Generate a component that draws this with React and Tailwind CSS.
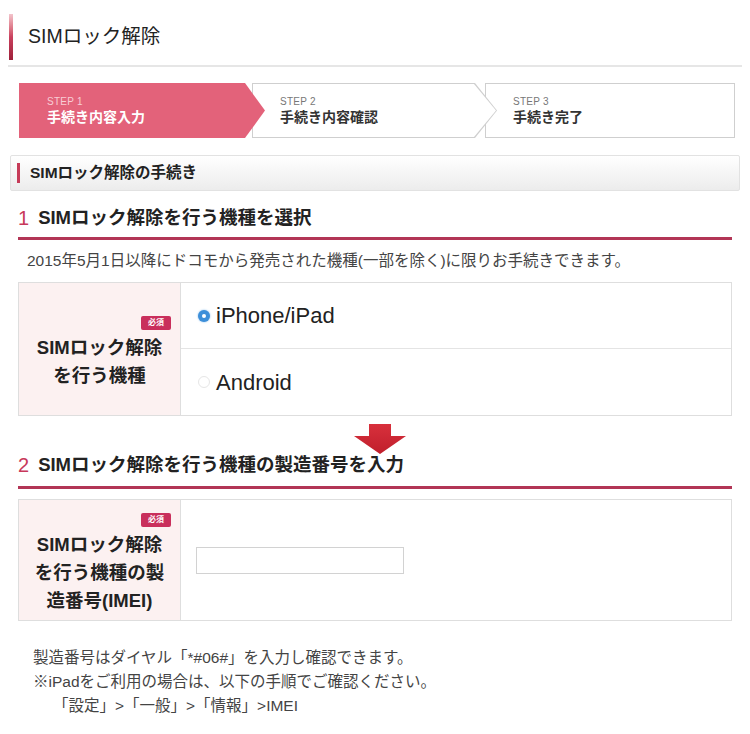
import React from "react";

const font = { fontFamily: '"Liberation Sans", "Noto Sans CJK JP", sans-serif' };

const Badge = () => (
  <span className="inline-flex items-center justify-center w-[30px] h-[14px] rounded-[2px] bg-[#c92f5c] text-white text-[8px] font-bold leading-none">
    必須
  </span>
);

const Radio = ({ checked }) =>
  checked ? (
    <span className="flex items-center justify-center w-[12px] h-[12px] rounded-full bg-[#3d8fd9] shadow-[0_0_2px_#7fb6ea]">
      <span className="w-[4px] h-[4px] rounded-full bg-white"></span>
    </span>
  ) : (
    <span className="w-[12px] h-[12px] rounded-full border border-[#e6e6e6] bg-white"></span>
  );

const Step = ({ num, label, active, shape, className }) => (
  <div className={`relative h-[55px] ${className}`}>
    {active ? (
      <div className={`absolute inset-0 bg-[#e3627a] ${shape}`}></div>
    ) : (
      <>
        <div className={`absolute inset-0 bg-[#cfcfcf] ${shape}`}></div>
        <div className={`absolute inset-[1px] bg-white ${shape}`}></div>
      </>
    )}
    <div className="relative flex flex-col justify-center h-full pl-[28px]">
      <span className={`text-[10px] leading-[13px] tracking-wide ${active ? "text-[#f8cdd5]" : "text-[#777]"}`}>
        STEP {num}
      </span>
      <span className={`text-[14px] leading-[18px] font-bold ${active ? "text-white" : "text-[#333]"}`}>
        {label}
      </span>
    </div>
  </div>
);

const Heading = ({ num, children, className }) => (
  <div className={`mx-[18px] ${className}`}>
    <div className="flex items-center gap-[9px] h-full">
      <span className="text-[20px] text-[#c8385a] leading-none">{num}</span>
      <span className="text-[18.5px] font-bold text-[#222] leading-none">{children}</span>
    </div>
  </div>
);

export default function App() {
  return (
    <div className="w-[750px] h-[734px] bg-white text-[#333]" style={font}>
      {/* page title */}
      <div className="flex items-center pt-[14px] pl-[9px]">
        <div className="w-[4px] h-[46px] bg-gradient-to-b from-[#f2c4cc] via-[#c9405e] to-[#9e1f39]"></div>
        <h1 className="ml-[15px] text-[19.5px] text-[#222] leading-none">SIMロック解除</h1>
      </div>
      <div className="mx-[8px] mt-[5px] h-[2px] bg-[#e6e6e6]"></div>

      {/* steps */}
      <div className="flex mt-[16px] ml-[19px]">
        <Step
          num="1"
          label="手続き内容入力"
          active
          className="w-[246px] z-30"
          shape="[clip-path:polygon(0_0,calc(100%-20px)_0,100%_50%,calc(100%-20px)_100%,0_100%)]"
        />
        <Step
          num="2"
          label="手続き内容確認"
          className="w-[245px] -ml-[13px] z-20"
          shape="[clip-path:polygon(0_0,calc(100%-22px)_0,100%_50%,calc(100%-22px)_100%,0_100%)]"
        />
        <Step num="3" label="手続き完了" className="w-[250px] -ml-[12px] z-10" shape="" />
      </div>

      {/* section box */}
      <div className="mx-[10px] mt-[17px] h-[36px] flex items-center rounded-[2px] border border-[#e2e2e2] bg-gradient-to-b from-white to-[#ececec]">
        <div className="ml-[6px] w-[3px] h-[20px] bg-[#c63b58]"></div>
        <span className="ml-[10px] text-[15.5px] font-bold text-[#222]">SIMロック解除の手続き</span>
      </div>

      <Heading num="1" className="mt-[8px] h-[38px]">SIMロック解除を行う機種を選択</Heading>
      <div className="mx-[18px] h-[3px] bg-[#b23556]"></div>

      <p className="h-[42px] flex items-center pl-[27px] text-[15.5px] text-[#444]">
        2015年5月1日以降にドコモから発売された機種(一部を除く)に限りお手続きできます。
      </p>

      {/* table 1 */}
      <div className="mx-[18px] flex border border-[#dedede]">
        <div className="w-[162px] shrink-0 bg-[#fcf1f1] border-r border-[#dedede] flex flex-col justify-center items-center">
          <div className="self-end pr-[9px]">
            <Badge />
          </div>
          <p className="mt-[2px] text-[18.5px] font-bold leading-[28px] text-center text-[#222]">
            SIMロック解除
            <br />
            を行う機種
          </p>
        </div>
        <div className="flex-1">
          <div className="h-[66px] flex items-center gap-[6px] pl-[17px] border-b border-[#e4e4e4]">
            <Radio checked />
            <span className="text-[22px] text-[#222]">iPhone/iPad</span>
          </div>
          <div className="h-[66px] flex items-center gap-[6px] pl-[17px]">
            <Radio />
            <span className="text-[22px] text-[#222]">Android</span>
          </div>
        </div>
      </div>

      {/* arrow */}
      <div className="flex justify-center mt-[8px] pl-[10px] h-[30px]">
        <svg width="52" height="30" viewBox="0 0 52 30">
          <defs>
            <linearGradient id="ar" x1="0" y1="0" x2="0" y2="1">
              <stop offset="0" stopColor="#d8303c" />
              <stop offset="1" stopColor="#c01f2c" />
            </linearGradient>
          </defs>
          <path d="M15 0 H37 V12 H52 L26 30 L0 12 H15 Z" fill="url(#ar)" />
        </svg>
      </div>

      <Heading num="2" className="-mt-[4px] h-[36px] pb-[6px]">SIMロック解除を行う機種の製造番号を入力</Heading>
      <div className="mx-[18px] h-[3px] bg-[#b23556]"></div>

      {/* table 2 */}
      <div className="mx-[18px] mt-[10px] h-[122px] flex border border-[#dedede]">
        <div className="w-[162px] shrink-0 bg-[#fcf1f1] border-r border-[#dedede] flex flex-col justify-center items-center">
          <div className="self-end pr-[9px]">
            <Badge />
          </div>
          <p className="mt-[2px] text-[18.5px] font-bold leading-[28px] text-center text-[#222]">
            SIMロック解除
            <br />
            を行う機種の製
            <br />
            造番号(IMEI)
          </p>
        </div>
        <div className="flex-1 flex items-center pl-[15px]">
          <input
            type="text"
            className="w-[208px] h-[27px] border border-[#d2d2d2] bg-white outline-none"
          />
        </div>
      </div>

      {/* notes */}
      <div className="mt-[25px] pl-[33px] text-[15.5px] leading-[24px] text-[#444]">
        <p>製造番号はダイヤル「*#06#」を入力し確認できます。</p>
        <p>※iPadをご利用の場合は、以下の手順でご確認ください。</p>
        <p className="pl-[20px]">「設定」&gt;「一般」&gt;「情報」&gt;IMEI</p>
      </div>
    </div>
  );
}
